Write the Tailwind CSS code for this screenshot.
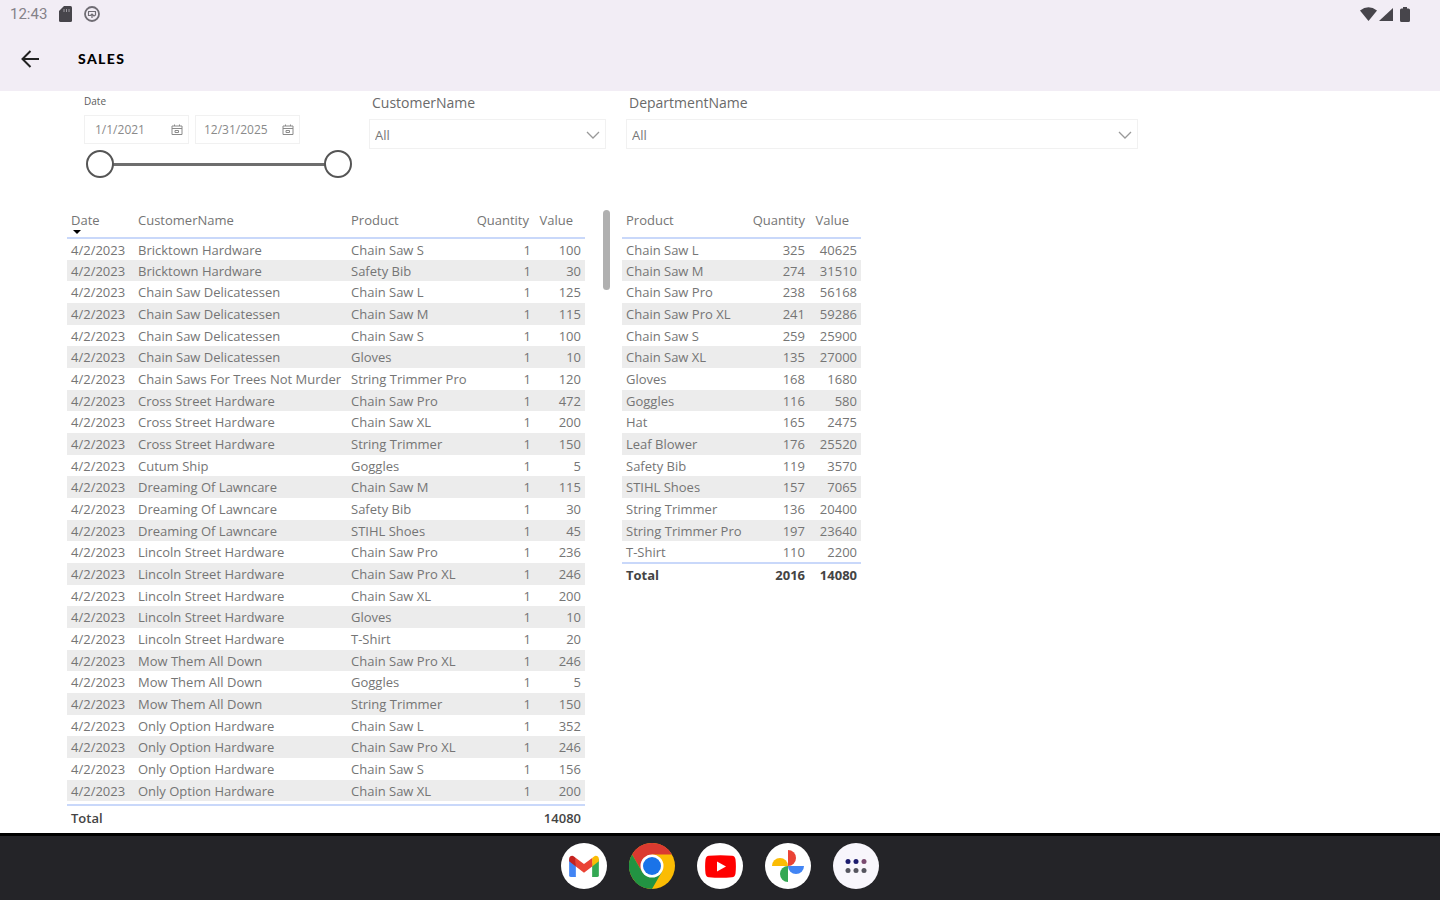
<!DOCTYPE html>
<html lang="en">
<head>
    <meta charset="UTF-8">
    <meta name="viewport" content="width=device-width, initial-scale=1.0">
    <title>Sales</title>
    <script src="https://cdn.jsdelivr.net/npm/@tailwindcss/browser@4"></script>
</head>
<body class="min-h-screen flex flex-col bg-white text-[#757575] font-['Open_Sans',sans-serif]">
    <!-- Status bar + app bar -->
    <header class="bg-[#f2edf5] h-[91px]">
        <div class="flex items-center justify-between h-7 pl-[10px] pr-[30px] text-[#47454b]">
            <div class="flex items-center gap-[10px]">
                <span class="font-['Roboto',sans-serif] text-[15px] leading-7 text-[#858289]">12:43</span>
                <svg class="w-[13px] h-4 ml-[2px]" viewBox="0 0 13 16" fill="currentColor"><path d="M5 0h6.500a1.500 1.500 0 0 1 1.500 1.500v13a1.500 1.500 0 0 1-1.500 1.500h-10A1.500 1.500 0 0 1 0 14.500V5z"/><path d="M5 3v3M7.500 3v3M10 3v3" stroke="#a09da4" stroke-width="1"/></svg>
                <svg class="w-4 h-4 ml-[2px]" viewBox="0 0 16 16" fill="none" stroke="#6f6c73" stroke-width="1.800"><circle cx="8" cy="8" r="7"/><path d="M4 5.500h8M4.500 6v3.500h2L8 8l2 2 1.500-1V6M8 8v4" stroke-width="1.200"/></svg>
            </div>
            <div class="flex items-center">
                <svg class="w-[17px] h-[14px]" viewBox="0 0 17 14" fill="currentColor"><path d="M0 3.500Q8.500-3 17 3.500L8.500 14z"/></svg>
                <svg class="w-[14px] h-[13px] ml-[2px]" viewBox="0 0 14 13" fill="currentColor"><path d="M14 0v13H0z"/></svg>
                <svg class="w-[10px] h-[15px] ml-[7px]" viewBox="0 0 10 15" fill="currentColor"><path d="M3 0h4v1.500h1.500A1.500 1.500 0 0 1 10 3v10.500a1.500 1.500 0 0 1-1.500 1.500h-7A1.500 1.500 0 0 1 0 13.500V3a1.500 1.500 0 0 1 1.500-1.500H3z"/></svg>
            </div>
        </div>
        <div class="flex items-center h-[62px] pl-5 gap-[38px]">
            <button type="button" aria-label="Back" class="text-[#222]">
                <svg class="w-5 h-5" viewBox="0 0 20 20" fill="none" stroke="currentColor" stroke-width="2"><path d="M19 10H3M10.500 2L2.500 10l8 8"/></svg>
            </button>
            <h1 class="font-['Lato',sans-serif] font-black text-sm tracking-widest text-black">SALES</h1>
        </div>
    </header>

    <main class="flex-1 pl-[67px] pr-6">
        <!-- Slicers -->
        <section class="flex items-start h-[119px] pl-[17px]">
            <div class="w-[268px]">
                <div id="date-label" class="text-[10px] leading-5 h-6 text-[#5c5c5c]">Date</div>
                <div class="flex gap-[6px]">
                    <div class="flex items-center w-[105px] h-[29px] border border-[#f1f1f1] pl-[10px] pr-[5px]">
                        <input type="text" aria-label="Start date" value="1/1/2021" class="flex-1 min-w-0 text-xs text-[#8a8a8a] outline-none">
                        <svg class="w-3 h-3" viewBox="0 0 12 12" fill="none" stroke="#8a8a8a"><path d="M1 2h10v8.500H1zM1 4.500h10M3.500.500V2M8.500.500V2M4 6.500h3.500v2H4z"/></svg>
                    </div>
                    <div class="flex items-center w-[105px] h-[29px] border border-[#f1f1f1] pl-2 pr-[5px]">
                        <input type="text" aria-label="End date" value="12/31/2025" class="flex-1 min-w-0 text-xs text-[#8a8a8a] outline-none">
                        <svg class="w-3 h-3" viewBox="0 0 12 12" fill="none" stroke="#8a8a8a"><path d="M1 2h10v8.500H1zM1 4.500h10M3.500.500V2M8.500.500V2M4 6.500h3.500v2H4z"/></svg>
                    </div>
                </div>
                <div class="relative h-7 mt-[6px] ml-[2px]">
                    <div class="absolute inset-x-3 top-[13px] h-[3px] bg-[#6e6e6e]"></div>
                    <input type="range" min="0" max="100" value="0" aria-label="Range start" class="absolute inset-0 w-full appearance-none bg-transparent pointer-events-none [&::-webkit-slider-thumb]:pointer-events-auto [&::-webkit-slider-thumb]:appearance-none [&::-webkit-slider-thumb]:size-7 [&::-webkit-slider-thumb]:rounded-full [&::-webkit-slider-thumb]:border-2 [&::-webkit-slider-thumb]:border-[#555] [&::-webkit-slider-thumb]:bg-white">
                    <input type="range" min="0" max="100" value="100" aria-label="Range end" class="absolute inset-0 w-full appearance-none bg-transparent pointer-events-none [&::-webkit-slider-thumb]:pointer-events-auto [&::-webkit-slider-thumb]:appearance-none [&::-webkit-slider-thumb]:size-7 [&::-webkit-slider-thumb]:rounded-full [&::-webkit-slider-thumb]:border-2 [&::-webkit-slider-thumb]:border-[#555] [&::-webkit-slider-thumb]:bg-white">
                </div>
            </div>
            <div class="w-[237px] ml-[17px]">
                <label for="customer" class="block pl-[3px] text-sm leading-6 h-7 text-[#6a6a6a]">CustomerName</label>
                <div class="relative">
                    <select id="customer" class="appearance-none w-full h-[30px] border border-[#f1f1f1] px-[5px] pt-[3px] text-[13px] text-[#777]"><option>All</option></select>
                    <svg class="absolute right-[6px] top-3 w-[14px] h-2 pointer-events-none" viewBox="0 0 14 8" fill="none" stroke="#999" stroke-width="1.300"><path d="M1 1l6 6 6-6"/></svg>
                </div>
            </div>
            <div class="w-[512px] ml-5">
                <label for="department" class="block pl-[3px] text-sm leading-6 h-7 text-[#6a6a6a]">DepartmentName</label>
                <div class="relative">
                    <select id="department" class="appearance-none w-full h-[30px] border border-[#f1f1f1] px-[5px] pt-[3px] text-[13px] text-[#777]"><option>All</option></select>
                    <svg class="absolute right-[6px] top-3 w-[14px] h-2 pointer-events-none" viewBox="0 0 14 8" fill="none" stroke="#999" stroke-width="1.300"><path d="M1 1l6 6 6-6"/></svg>
                </div>
            </div>
        </section>

        <!-- Tables -->
        <section class="flex items-start">
            <table class="table-fixed w-[518px] text-[13px] leading-5 whitespace-nowrap [&_td]:px-1 [&_th]:px-1">
                <colgroup><col class="w-[67px]"><col class="w-[213px]"><col class="w-[123px]"><col class="w-[65px]"><col class="w-[50px]"></colgroup>
                <thead>
                    <tr class="h-7 border-b-2 border-[#c9d8fa] text-left align-top [&>th]:font-normal">
                        <th scope="col" aria-sort="ascending" class="relative">Date<span class="absolute left-[6px] top-5 border-x-4 border-t-4 border-x-transparent border-t-black"></span></th>
                        <th scope="col">CustomerName</th>
                        <th scope="col">Product</th>
                        <th scope="col"><div class="text-right pr-[2px]">Quantity</div></th>
                        <th scope="col"><div class="text-right pr-2">Value</div></th>
                    </tr>
                </thead>
                <tbody id="sales" class="[&>tr]:h-[22px] [&>tr:nth-child(3n+2)]:h-[21px] [&>tr:nth-child(even)]:bg-[#ececec]"></tbody>
                <tfoot>
                    <tr class="h-1"><td colspan="5"></td></tr>
                    <tr class="h-6 border-t-2 border-[#c9d8fa] font-semibold text-[#444]"><td>Total</td><td></td><td></td><td></td><td class="text-right">14080</td></tr>
                </tfoot>
            </table>
            <div class="w-[7px] h-20 ml-[18px] rounded-full bg-[#b0b0b0]"></div>
            <table class="table-fixed w-[239px] ml-3 text-[13px] leading-5 whitespace-nowrap [&_td]:px-1 [&_th]:px-1">
                <colgroup><col class="w-[125px]"><col class="w-[62px]"><col class="w-[52px]"></colgroup>
                <thead>
                    <tr class="h-7 border-b-2 border-[#c9d8fa] text-left align-top [&>th]:font-normal">
                        <th scope="col">Product</th>
                        <th scope="col" class="text-right">Quantity</th>
                        <th scope="col"><div class="text-right pr-2">Value</div></th>
                    </tr>
                </thead>
                <tbody id="products" class="[&>tr]:h-[22px] [&>tr:nth-child(3n+2)]:h-[21px] [&>tr:nth-child(even)]:bg-[#ececec]"></tbody>
                <tfoot>
                    <tr class="h-[22px] border-t-2 border-[#c9d8fa] font-bold text-[#444]"><td>Total</td><td class="text-right">2016</td><td class="text-right">14080</td></tr>
                </tfoot>
            </table>
        </section>
    </main>

    <!-- Taskbar -->
    <nav class="flex justify-center items-start gap-[22px] h-[67px] pt-[7px] bg-[#242428] border-t-3 border-black">
        <a href="#" aria-label="Gmail" class="flex items-center justify-center size-[46px] rounded-full bg-white">
            <svg class="w-[30px] h-[23px]" viewBox="0 0 31 24"><path fill="#4285f4" d="M0 4l7 5v14H2a2 2 0 0 1-2-2z"/><path fill="#34a853" d="M31 4l-7 5v14h5a2 2 0 0 0 2-2z"/><path fill="#fbbc04" d="M24 3l2-1.500c2-1.500 5 0 5 2.500v2.500L24 12z"/><path fill="#c5221f" d="M7 3L5 1.500C3 0 0 1.500 0 4v2.500L7 12z"/><path fill="#ea4335" d="M7 3l8.500 6.500L24 3v9l-8.500 6.500L7 12z"/></svg>
        </a>
        <a href="#" aria-label="Chrome" class="size-[46px]">
            <svg class="size-full" viewBox="0 0 46 46"><circle cx="23" cy="23" r="23" fill="#fbbc04"/><path fill="#db3a30" d="M3.080 11.500A23 23 0 0 1 42.920 11.500H23L13.040 28.750z"/><path fill="#229342" d="M3.080 11.500A23 23 0 0 0 23 46L32.960 28.750L13.040 28.750z"/><circle cx="23" cy="23" r="11.500" fill="#fff"/><circle cx="23" cy="23" r="9" fill="#1a73e8"/></svg>
        </a>
        <a href="#" aria-label="YouTube" class="flex items-center justify-center size-[46px] rounded-full bg-white">
            <svg class="w-[31px] h-[23px]" viewBox="0 0 31 23"><path fill="#f00" d="M4 .800Q15.500-.500 27 .800Q30 1 30.500 4.500Q31.300 11.500 30.500 18.500Q30 22 27 22.200Q15.500 23.500 4 22.200Q1 22 .500 18.500Q-.300 11.500.500 4.500Q1 1 4 .800z"/><path fill="#fff" d="M12 6.500l9 5-9 5z"/></svg>
        </a>
        <a href="#" aria-label="Photos" class="flex items-center justify-center size-[46px] rounded-full bg-white">
            <svg class="size-[34px]" viewBox="0 0 34 34"><path fill="#ea4335" d="M17 1a8 8 0 0 1 0 16z"/><path fill="#4285f4" d="M33 17a8 8 0 0 1-16 0z"/><path fill="#34a853" d="M17 33a8 8 0 0 1 0-16z"/><path fill="#fbbc04" d="M1 17a8 8 0 0 1 16 0z"/></svg>
        </a>
        <button type="button" aria-label="All apps" class="flex items-center justify-center size-[46px] rounded-full bg-[#f8f6fc]">
            <svg class="w-[22px] h-[14px]" viewBox="0 0 22 14"><g fill="#1c1c6e"><circle cx="3" cy="2.500" r="2.500"/><circle cx="11" cy="2.500" r="2.500"/></g><circle cx="19" cy="2.500" r="2.500" fill="#7a4a70"/><g fill="#55555f"><circle cx="3" cy="11.500" r="2.500"/><circle cx="11" cy="11.500" r="2.500"/><circle cx="19" cy="11.500" r="2.500"/></g></svg>
        </button>
    </nav>

    <script>
        const sales = [
            ['Bricktown Hardware', 'Chain Saw S', 100],
            ['Bricktown Hardware', 'Safety Bib', 30],
            ['Chain Saw Delicatessen', 'Chain Saw L', 125],
            ['Chain Saw Delicatessen', 'Chain Saw M', 115],
            ['Chain Saw Delicatessen', 'Chain Saw S', 100],
            ['Chain Saw Delicatessen', 'Gloves', 10],
            ['Chain Saws For Trees Not Murder', 'String Trimmer Pro', 120],
            ['Cross Street Hardware', 'Chain Saw Pro', 472],
            ['Cross Street Hardware', 'Chain Saw XL', 200],
            ['Cross Street Hardware', 'String Trimmer', 150],
            ['Cutum Ship', 'Goggles', 5],
            ['Dreaming Of Lawncare', 'Chain Saw M', 115],
            ['Dreaming Of Lawncare', 'Safety Bib', 30],
            ['Dreaming Of Lawncare', 'STIHL Shoes', 45],
            ['Lincoln Street Hardware', 'Chain Saw Pro', 236],
            ['Lincoln Street Hardware', 'Chain Saw Pro XL', 246],
            ['Lincoln Street Hardware', 'Chain Saw XL', 200],
            ['Lincoln Street Hardware', 'Gloves', 10],
            ['Lincoln Street Hardware', 'T-Shirt', 20],
            ['Mow Them All Down', 'Chain Saw Pro XL', 246],
            ['Mow Them All Down', 'Goggles', 5],
            ['Mow Them All Down', 'String Trimmer', 150],
            ['Only Option Hardware', 'Chain Saw L', 352],
            ['Only Option Hardware', 'Chain Saw Pro XL', 246],
            ['Only Option Hardware', 'Chain Saw S', 156],
            ['Only Option Hardware', 'Chain Saw XL', 200]
        ];
        const products = [
            ['Chain Saw L', 325, 40625],
            ['Chain Saw M', 274, 31510],
            ['Chain Saw Pro', 238, 56168],
            ['Chain Saw Pro XL', 241, 59286],
            ['Chain Saw S', 259, 25900],
            ['Chain Saw XL', 135, 27000],
            ['Gloves', 168, 1680],
            ['Goggles', 116, 580],
            ['Hat', 165, 2475],
            ['Leaf Blower', 176, 25520],
            ['Safety Bib', 119, 3570],
            ['STIHL Shoes', 157, 7065],
            ['String Trimmer', 136, 20400],
            ['String Trimmer Pro', 197, 23640],
            ['T-Shirt', 110, 2200]
        ];
        document.getElementById('sales').innerHTML = sales.map(([customer, product, value]) =>
            `<tr><td>4/2/2023</td><td>${customer}</td><td>${product}</td><td class="text-right">1</td><td class="text-right">${value}</td></tr>`
        ).join('');
        document.getElementById('products').innerHTML = products.map(([product, quantity, value]) =>
            `<tr><td>${product}</td><td class="text-right">${quantity}</td><td class="text-right">${value}</td></tr>`
        ).join('');
    </script>
</body>
</html>
